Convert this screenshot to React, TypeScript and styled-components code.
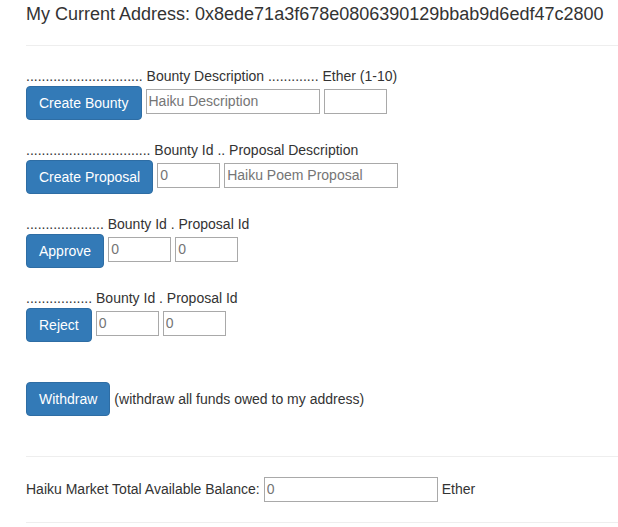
import React from "react";
import styled, { createGlobalStyle } from "styled-components";

const Global = createGlobalStyle`
  html, body { margin: 0; padding: 0; background: #fff; }
  body {
    font-family: "Liberation Sans", Arial, Helvetica, sans-serif;
    font-size: 14px;
    line-height: 20px;
    color: #333;
    overflow: hidden;
  }
  * { box-sizing: border-box; }
`;

const Page = styled.div`
  display: flex;
  flex-direction: column;
  padding-left: 26px;
`;

const Heading = styled.h4`
  margin: 5px 0 0;
  font-size: 18px;
  font-weight: 500;
  line-height: 19.8px;
  color: #333;
  white-space: nowrap;
`;

const Rule = styled.hr`
  margin: 20px 0;
  border: 0;
  border-top: 1px solid #eee;
  width: 100%;
`;

const Section = styled.div`
  display: flex;
  flex-direction: column;
  margin-bottom: 20px;
`;

const Label = styled.div`
  height: 20px;
  white-space: pre;
`;

const Row = styled.div<{ $align?: string }>`
  display: flex;
  align-items: ${(p) => p.$align || "flex-start"};
  gap: 4px;
  white-space: nowrap;
`;

const Button = styled.button`
  font-family: inherit;
  font-size: 14px;
  line-height: 20px;
  font-weight: 400;
  color: #fff;
  background: #337ab7;
  border: 1px solid #2e6da4;
  border-radius: 4px;
  padding: 6px 12px;
  height: 34px;
  cursor: pointer;
  white-space: nowrap;
`;

const Input = styled.input<{ $w: number }>`
  font-family: inherit;
  font-size: 14px;
  line-height: 20px;
  width: ${(p) => p.$w}px;
  height: 25px;
  margin-top: 3px;
  padding: 1px 2px;
  border: 1px solid #a9a9a9;
  border-radius: 0;
  color: #333;
  background: #fff;
  outline: none;
  &::placeholder { color: #757575; }
`;

const Note = styled.span`
  line-height: 34px;
`;

const BalanceInput = styled(Input)`
  margin-top: 0;
`;

const dots = (n: number) => ".".repeat(n);

export default function App() {
  return (
    <>
      <Global />
      <Page>
        <Heading>My Current Address: 0x8ede71a3f678e0806390129bbab9d6edf47c2800</Heading>
        <Rule />

        <Section>
          <Label>{`${dots(30)} Bounty Description ${dots(13)} Ether (1-10)`}</Label>
          <Row>
            <Button>Create Bounty</Button>
            <Input $w={174} placeholder="Haiku Description" />
            <Input $w={63} />
          </Row>
        </Section>

        <Section>
          <Label>{`${dots(32)} Bounty Id .. Proposal Description`}</Label>
          <Row>
            <Button>Create Proposal</Button>
            <Input $w={63} placeholder="0" />
            <Input $w={174} placeholder="Haiku Poem Proposal" />
          </Row>
        </Section>

        <Section>
          <Label>{`${dots(20)} Bounty Id . Proposal Id`}</Label>
          <Row>
            <Button>Approve</Button>
            <Input $w={63} placeholder="0" />
            <Input $w={63} placeholder="0" />
          </Row>
        </Section>

        <Section>
          <Label>{`${dots(17)} Bounty Id . Proposal Id`}</Label>
          <Row>
            <Button>Reject</Button>
            <Input $w={63} placeholder="0" />
            <Input $w={63} placeholder="0" />
          </Row>
        </Section>

        <Section>
          <Label />
          <Row>
            <Button>Withdraw</Button>
            <Note>(withdraw all funds owed to my address)</Note>
          </Row>
        </Section>

        <Rule />

        <Row $align="baseline">
          <span>Haiku Market Total Available Balance:</span>
          <BalanceInput $w={174} placeholder="0" />
          <span>Ether</span>
        </Row>

        <Rule />
      </Page>
    </>
  );
}
